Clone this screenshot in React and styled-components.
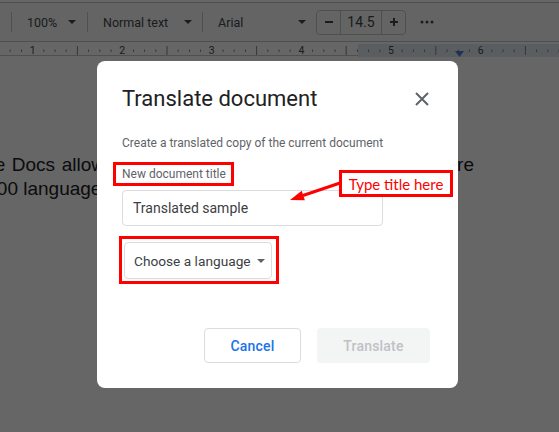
import React from 'react';
import styled, { createGlobalStyle } from 'styled-components';

const GlobalStyle = createGlobalStyle`
  html, body {
    margin: 0;
    padding: 0;
    background: #fff;
    font-family: Roboto, "Liberation Sans", sans-serif;
  }
`;

const Screen = styled.div`
  position: relative;
  width: 559px;
  height: 432px;
  overflow: hidden;
  background: #fff;
`;

const Toolbar = styled.div`
  margin-top: 2px;
  height: 38px;
  border-top: 1px solid #c4c7c5;
  background: #f9fbfd;
  display: flex;
  align-items: center;
  color: #444746;
  font-size: 12.5px;
`;

const Sep = styled.div`
  width: 1px;
  height: 20px;
  background: #c7c7c7;
  margin: 0 ${p => p.$right || 15}px 0 ${p => p.$left || 0}px;
`;

const Select = styled.div`
  display: flex;
  align-items: center;
  width: ${p => p.$w}px;
  justify-content: space-between;
  margin-right: ${p => p.$mr || 0}px;
  white-space: nowrap;
`;

const Caret = styled.span`
  width: 0;
  height: 0;
  border-left: 4px solid transparent;
  border-right: 4px solid transparent;
  border-top: 4px solid ${p => p.$color || '#444746'};
`;

const SizeBox = styled.div`
  display: flex;
  height: 23px;
  border: 1px solid #c4c7c5;
  border-radius: 4px;
  margin-right: 14px;
`;

const SizeCell = styled.div`
  width: ${p => p.$w}px;
  display: flex;
  align-items: center;
  justify-content: center;
  border-left: ${p => (p.$divider ? '1px solid #c4c7c5' : 'none')};
  font-size: 14px;
`;

const Ruler = styled.div`
  height: 13px;
  border-top: 1px solid #c4c7c5;
  border-bottom: 1px solid #c4c7c5;
  background: #fff;
`;

const DocArea = styled.div`
  padding-top: 97px;
  margin-left: -56px;
  width: 530px;
  font-family: "Liberation Sans", Arial, sans-serif;
  font-size: 19px;
  line-height: 24px;
  color: #202124;
`;

const DocLine = styled.div`
  text-align: ${p => (p.$justify ? 'justify' : 'left')};
  text-align-last: ${p => (p.$justify ? 'justify' : 'auto')};
`;

const Overlay = styled.div`
  position: absolute;
  inset: 0;
  background: rgba(0, 0, 0, 0.6);
`;

const Dialog = styled.div`
  position: absolute;
  left: 97px;
  top: 61px;
  width: 361px;
  height: 327px;
  box-sizing: border-box;
  padding: 24px 28px 25px 25px;
  background: #fff;
  border-radius: 8px;
  display: flex;
  flex-direction: column;
  align-items: flex-start;
`;

const Header = styled.div`
  align-self: stretch;
  display: flex;
  justify-content: space-between;
  align-items: center;
`;

const Title = styled.h1`
  margin: 0;
  font-size: 22px;
  line-height: 28px;
  font-weight: 400;
  color: #202124;
`;

const CloseBtn = styled.button`
  border: 0;
  background: none;
  padding: 0;
  margin-right: 1px;
  width: 14px;
  height: 14px;
  display: flex;
  cursor: pointer;
`;

const Subtitle = styled.p`
  margin: 22px 0 0;
  font-size: 12px;
  line-height: 16px;
  color: #5f6368;
`;

const Highlight = styled.div`
  border: 3px solid #ff0000;
  margin-left: ${p => p.$ml}px;
  margin-top: ${p => p.$mt}px;
  padding: ${p => p.$pad};
`;

const Label = styled.div`
  font-size: 12px;
  line-height: 18px;
  color: #5f6368;
  white-space: nowrap;
`;

const Input = styled.div`
  margin-top: 4px;
  width: 261px;
  height: 36px;
  box-sizing: border-box;
  border: 1px solid #dadce0;
  border-radius: 4px;
  padding-left: 10px;
  display: flex;
  align-items: center;
  font-size: 14px;
  color: #3c4043;
`;

const Dropdown = styled.div`
  width: 148px;
  height: 37px;
  box-sizing: border-box;
  border: 1px solid #dadce0;
  border-radius: 4px;
  padding: 0 5px 0 9px;
  display: flex;
  align-items: center;
  gap: 6px;
  font-size: 13.7px;
  color: #3c4043;
  white-space: nowrap;
`;

const Footer = styled.div`
  margin-top: auto;
  align-self: stretch;
  display: flex;
  justify-content: flex-end;
  gap: 16px;
`;

const Button = styled.button`
  width: ${p => p.$w}px;
  height: 35px;
  box-sizing: border-box;
  border-radius: 4px;
  font-family: Roboto, sans-serif;
  font-size: 14px;
  font-weight: 500;
  letter-spacing: 0.2px;
  border: ${p => (p.$primary ? '0' : '1px solid #dadce0')};
  background: ${p => (p.$primary ? '#f3f4f4' : '#fff')};
  color: ${p => (p.$primary ? '#bfc2c5' : '#1a73e8')};
`;

const Note = styled.div`
  position: absolute;
  left: 339px;
  top: 170px;
  width: 114px;
  height: 27px;
  box-sizing: border-box;
  border: 3px solid #ff0000;
  background: #fff;
  display: flex;
  align-items: center;
  justify-content: center;
  font-family: Lato, "Noto Sans", sans-serif;
  font-size: 15px;
  color: #ff0000;
`;

const ArrowSvg = styled.svg`
  position: absolute;
  left: 0;
  top: 0;
`;

const rulerTicks = () => {
  const items = [];
  for (let k = 0; k < 60; k++) {
    const x = -57 + k * 11.2;
    if (x < 0 || x > 559) continue;
    if (k % 8 === 0) {
      items.push(
        <text key={k} x={x} y={10} fontSize="10.5" textAnchor="middle" fill="#444746" fontFamily="Roboto, sans-serif">
          {k / 8}
        </text>
      );
    } else if (k % 4 === 0) {
      items.push(<line key={k} x1={x} x2={x} y1={2} y2={11} stroke="#80868b" strokeWidth="1" />);
    } else {
      items.push(<line key={k} x1={x} x2={x} y1={5.5} y2={8} stroke="#80868b" strokeWidth="1" />);
    }
  }
  return items;
};

const App = () => (
  <>
    <GlobalStyle />
    <Screen>
      <Toolbar>
        <Sep $left={11} />
        <Select $w={49} $mr={11}>
          <span>100%</span>
          <Caret />
        </Select>
        <Sep />
        <Select $w={89} $mr={10}>
          <span>Normal text</span>
          <Caret />
        </Select>
        <Sep />
        <Select $w={88} $mr={10}>
          <span>Arial</span>
          <Caret />
        </Select>
        <SizeBox>
          <SizeCell $w={23}>
            <svg width="10" height="10" viewBox="0 0 10 10">
              <path d="M1 5h8" stroke="#444746" strokeWidth="2" />
            </svg>
          </SizeCell>
          <SizeCell $w={40} $divider>14.5</SizeCell>
          <SizeCell $w={23} $divider>
            <svg width="10" height="10" viewBox="0 0 10 10">
              <path d="M1 5h8M5 1v8" stroke="#444746" strokeWidth="2" />
            </svg>
          </SizeCell>
        </SizeBox>
        <svg width="14" height="4" viewBox="0 0 14 4">
          <circle cx="2" cy="2" r="1.5" fill="#444746" />
          <circle cx="7" cy="2" r="1.5" fill="#444746" />
          <circle cx="12" cy="2" r="1.5" fill="#444746" />
        </svg>
      </Toolbar>
      <Ruler>
        <svg width="559" height="13" viewBox="0 0 559 13">
          <rect x="358" y="0" width="201" height="13" fill="#e4eaf2" />
          {rulerTicks()}
          <path d="M455 7h9l-4.5 6z" fill="#4a7fd9" />
        </svg>
      </Ruler>
      <DocArea>
        <DocLine $justify>Google Docs allows you to translate your document into more</DocLine>
        <DocLine>than 100 languages.</DocLine>
      </DocArea>
      <Overlay />
      <Dialog>
        <Header>
          <Title>Translate document</Title>
          <CloseBtn aria-label="Close">
            <svg width="14" height="14" viewBox="0 0 14 14">
              <path d="M1 1l12 12M13 1L1 13" stroke="#5f6368" strokeWidth="2" />
            </svg>
          </CloseBtn>
        </Header>
        <Subtitle>Create a translated copy of the current document</Subtitle>
        <Highlight $ml={-9} $mt={11} $pad="0 5px 0 6px">
          <Label>New document title</Label>
        </Highlight>
        <Input>Translated sample</Input>
        <Highlight $ml={-3} $mt={10} $pad="3px 4px 2px 2px">
          <Dropdown>
            <span>Choose a language</span>
            <Caret $color="#5f6368" />
          </Dropdown>
        </Highlight>
        <Footer>
          <Button $w={97}>Cancel</Button>
          <Button $w={113} $primary>Translate</Button>
        </Footer>
      </Dialog>
      <ArrowSvg width="559" height="432" viewBox="0 0 559 432">
        <line x1="340" y1="183" x2="303" y2="195.5" stroke="#ff0000" strokeWidth="3" />
        <path d="M290 200L304.9 200.2L301.7 190.8z" fill="#ff0000" />
      </ArrowSvg>
      <Note>Type title here</Note>
    </Screen>
  </>
);

export default App;
